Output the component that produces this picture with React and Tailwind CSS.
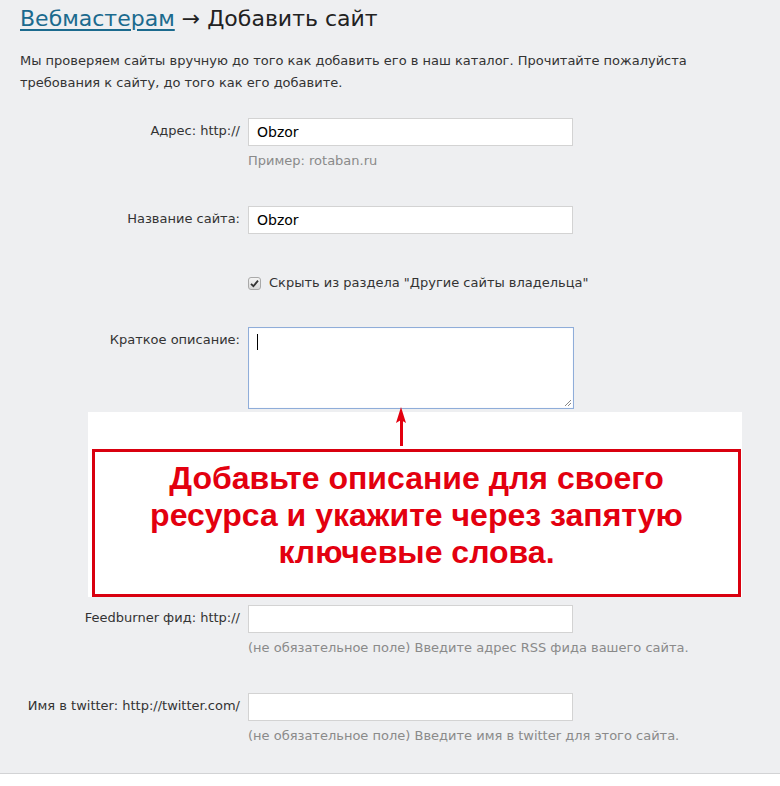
import React from 'react';

const font = { fontFamily: '"DejaVu Sans", Verdana, sans-serif' };

function Field({ label, value, hint, top }) {
  return (
    <div className={`flex ${top}`}>
      <div className="w-[248px] pr-[8px] text-right text-[13px] leading-[20px] pt-[3px] text-[#333]">{label}</div>
      <div>
        <div className="w-[325px] h-[28px] bg-white border border-[#d3d3d3] px-[8px] flex items-center text-[14px] text-black">
          {value}
        </div>
        {hint && <div className="mt-[5px] text-[13px] leading-[20px] text-[#8a8a8a]">{hint}</div>}
      </div>
    </div>
  );
}

export default function App() {
  return (
    <div style={font} className="w-[780px] h-[786px] bg-white overflow-hidden">
      <div className="h-[774px] bg-[#eeeff1] border-b border-[#d2d3d5] pl-[20px]">
        {/* Heading */}
        <h1 className="pt-[4px] text-[22px] leading-[30px] text-[#222]">
          <a href="#" className="text-[#1b6a8e] underline decoration-[1.5px] underline-offset-[3px]">Вебмастерам</a>
          {' → Добавить сайт'}
        </h1>
        <p className="mt-[16px] text-[13px] leading-[22px] text-[#333] w-[700px]">
          Мы проверяем сайты вручную до того как добавить его в наш каталог. Прочитайте пожалуйста<br />
          требования к сайту, до того как его добавите.
        </p>

        <div className="-ml-[20px]">
          <Field top="mt-[24px]" label="Адрес: http://" value="Obzor" hint="Пример: rotaban.ru" />
          <Field top="mt-[35px]" label="Название сайта:" value="Obzor" />

          {/* Checkbox */}
          <div className="mt-[42px] ml-[248px] flex items-center gap-[8px] h-[14px]">
            <div className="w-[13px] h-[13px] rounded-[3px] border border-[#a9a9a9] bg-gradient-to-b from-[#f4f4f4] to-[#d8d8d8] flex items-center justify-center">
              <svg width="9" height="9" viewBox="0 0 9 9">
                <path d="M1 4.8 L3.4 7.2 L8 1.6" fill="none" stroke="#333" strokeWidth="1.8" />
              </svg>
            </div>
            <span className="text-[13px] text-[#333]">Скрыть из раздела "Другие сайты владельца"</span>
          </div>

          {/* Textarea */}
          <div className="flex mt-[37px]">
            <div className="w-[248px] pr-[8px] text-right text-[13px] leading-[20px] pt-[3px] text-[#333]">Краткое описание:</div>
            <div className="relative w-[326px] h-[82px] bg-white border border-[#8fadd9] shadow-[inset_0_0_1px_#c6d6ee]">
              <div className="absolute left-[8px] top-[6px] w-[1px] h-[16px] bg-black" />
              <svg className="absolute right-[1px] bottom-[1px]" width="8" height="8" viewBox="0 0 8 8">
                <path d="M7 1 L1 7 M7 4 L4 7" stroke="#888" strokeWidth="1" />
              </svg>
            </div>
          </div>

          {/* Callout */}
          <div className="relative ml-[88px] mt-[3px] w-[654px] bg-white pt-[37px] pl-[4px]">
            <div className="absolute left-[307px] -top-[5px] flex flex-col items-center">
              <svg width="12" height="16" viewBox="0 0 12 16">
                <path d="M6 0 L11 16 L6 13 L1 16 Z" fill="#e3000f" />
              </svg>
              <div className="w-[3px] h-[26px] bg-[#e3000f] -mt-[3px]" />
            </div>
            <div
              className="w-[649px] h-[148px] border-[3px] border-[#d9000f] flex items-center justify-center text-center text-[#e3000f] text-[32px] leading-[37px] font-bold pb-[16px]"
              style={{ fontFamily: '"Liberation Sans", Arial, sans-serif' }}
            >
              <div>
                Добавьте описание для своего<br />
                ресурса и укажите через запятую<br />
                ключевые слова.
              </div>
            </div>
          </div>

          <Field top="mt-[8px]" label="Feedburner фид: http://" value="" hint="(не обязательное поле) Введите адрес RSS фида вашего сайта." />
          <Field top="mt-[35px]" label="Имя в twitter: http://twitter.com/" value="" hint="(не обязательное поле) Введите имя в twitter для этого сайта." />
        </div>
      </div>
    </div>
  );
}
